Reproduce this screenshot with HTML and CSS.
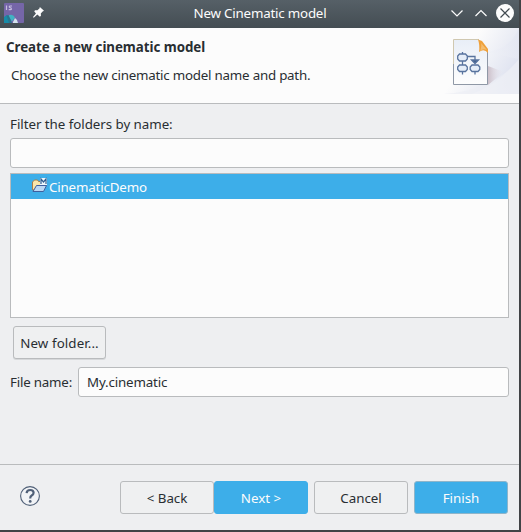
FILE: index.html
```html
<!DOCTYPE html>
<html lang="en">
<head>
<meta charset="utf-8">
<title>New Cinematic model</title>
<link rel="stylesheet" href="styles.css">
</head>
<body>
<main class="window">
  <header class="titlebar">
    <div class="title-left">
      <svg class="app-icon" width="20" height="20" viewBox="0 0 20 20">
        <rect width="20" height="20" rx="1" fill="#7566a8"/>
        <path d="M2.500 2.500v4.500M8 3H6Q4.700 3.600 5.800 4.500L7 5Q8 6.600 6.500 6.600H4.700" fill="none" stroke="#c5bddf" stroke-width="1.200"/>
        <path d="M0 20v-6l3-2 3 8z" fill="#168ba8"/>
        <path d="M4 12.500q5-2 7 2l-3 4z" fill="#41b3c3"/>
        <path d="M2.500 12.500l2-.5 3.500 8H5z" fill="#28758f"/>
        <path d="M9 19l2-4q3 2 3 5H9z" fill="#d3e3ed"/>
      </svg>
      <svg class="pin" width="11" height="11" viewBox="0 0 12 12">
        <path d="M7.500 0L12 4.200 10.500 5 8.500 7.200 8.700 9.500 7.500 10.500 4.700 8.200.800 11.700 0 11 3.200 7 1.300 4.600 2.300 3.500 4.800 3.600 7 1.500z" fill="#fcfcfc"/>
      </svg>
    </div>
    <h1 class="title">New Cinematic model</h1>
    <svg class="controls" width="66" height="20" viewBox="0 0 66 20">
      <path d="M3.500 7.500l5.500 5.500 5.500-5.500M27.500 13l5.500-5.500 5.500 5.500" fill="none" stroke="#fcfcfc" stroke-width="1.200"/>
      <circle cx="57" cy="10" r="9" fill="#fcfcfc"/>
      <path d="M52.500 5.500l9 9M61.500 5.500l-9 9" stroke="#424b51" stroke-width="1.200"/>
    </svg>
  </header>
  <section class="banner">
    <div class="banner-text">
      <h2>Create a new cinematic model</h2>
      <p>Choose the new cinematic model name and path.</p>
    </div>
    <svg class="banner-art" width="75" height="66" viewBox="0 0 75 66">
      <defs>
        <linearGradient id="sky" x1="0" y1="0" x2="1" y2=".5">
          <stop offset=".4" stop-color="#fcfcfc"/><stop offset="1" stop-color="#dfe3f0"/>
        </linearGradient>
        <linearGradient id="swoosh" x1="0" y1="1" x2="1" y2="0">
          <stop offset="0" stop-color="#fcfcfc"/><stop offset="1" stop-color="#e0e4f1"/>
        </linearGradient>
        <linearGradient id="paper" x1="0" y1="0" x2="0" y2="1">
          <stop offset="0" stop-color="#e8eef7"/><stop offset="1" stop-color="#fdfdfd"/>
        </linearGradient>
        <linearGradient id="shade" x1="0" y1="0" x2="1" y2="0">
          <stop offset="0" stop-color="#cbbfc9"/><stop offset="1" stop-color="#eceaf2" stop-opacity="0"/>
        </linearGradient>
      </defs>
      <rect width="75" height="66" fill="url(#sky)"/>
      <path d="M42 24Q66 22 75 0V66H28Q55 56 75 31" fill="url(#swoosh)" opacity=".6"/>
      <path d="M0 66Q50 63 75 31V66z" fill="#eceef5" opacity=".65"/>
      <path d="M44 38L60 44 44 57z" fill="url(#shade)"/>
      <path d="M9.500 11.500H35L43.500 23V56.500H9.500z" fill="url(#paper)"/>
      <path d="M9.500 56V11.500H35" fill="none" stroke="#d0c8b0"/>
      <path d="M43.500 23V56.500H9.500V36" fill="none" stroke="#8f98a6"/>
      <path d="M34 11.500Q36 17 35 24Q40 20 44 25V21L38 13z" fill="#efa13b"/>
      <path d="M36 23Q38 18 37 15L43 22Q39 20 36 23z" fill="#f4bd70"/>
      <g fill="#e5edf8" stroke="#58739e" stroke-width="1.300">
        <path d="M18.500 24v2M18.500 33v4M18.500 43.500v3M31 43.500v3M23 28.500h8v4" fill="none"/>
        <path d="M15.500 26h6l1.800 2v3l-1.800 2h-6l-1.800-2v-3zM15.500 37h6l1.800 2v2.500l-1.800 2h-6l-1.800-2V39zM28 37h6l1.800 2v2.500l-1.800 2h-6l-1.800-2V39z"/>
        <path d="M27.500 32h7L31 35.500z" fill="#45638f"/>
      </g>
    </svg>
  </section>
  <section class="content">
    <label class="filter-label" for="filter">Filter the folders by name:</label>
    <input class="field" id="filter" type="text">
    <div class="tree">
      <div class="tree-row">
        <svg width="16" height="16" viewBox="0 0 16 16">
          <path d="M.500 13V5l2-2h3l1 1.500h4V12z" fill="#fae6aa" stroke="#a87d4a"/>
          <path d="M1 14.500l3.500-6H14.500l-3 6z" fill="#bad7f4" stroke="#3f5f9e"/>
          <path d="M8 1h7v7H8z" fill="#edf6fc"/>
          <path d="M9 7V2l2.500 3L14 2v5" fill="none" stroke="#315f91" stroke-width="1.200"/>
        </svg>
        <span>CinematicDemo</span>
      </div>
    </div>
    <button class="button new-folder">New folder...</button>
    <div class="file-row">
      <label for="file">File name:</label>
      <input class="field" id="file" type="text" value="My.cinematic">
    </div>
  </section>
  <footer class="footer">
    <svg class="help" width="22" height="22" viewBox="0 0 22 22">
      <circle cx="11" cy="11" r="9.400" fill="#f1f3f6" stroke="#506078" stroke-width="1.100"/>
      <path d="M7.600 8.200Q7.900 5 11.200 5Q14.600 5 14.600 7.800Q14.600 9.400 12.700 10.500Q11.200 11.400 11.200 13.400" fill="none" stroke="#506078" stroke-width="2.200"/>
      <circle cx="11.200" cy="16.400" r="1.400" fill="#506078"/>
    </svg>
    <div class="actions">
      <button class="button">&lt; Back</button>
      <button class="button primary next">Next &gt;</button>
      <button class="button cancel">Cancel</button>
      <button class="button primary finish">Finish</button>
    </div>
  </footer>
</main>
</body>
</html>
```
FILE: styles.css
```css
* { box-sizing: border-box; }
body {
  margin: 0;
  height: 532px;
  overflow: hidden;
  background: #414346;
  color: #292e32;
  font: 13.33px/18px "Noto Sans", sans-serif;
}
h1, h2, p { margin: 0; }
svg { display: block; flex: none; }
.window {
  display: flex;
  flex-direction: column;
  width: 519px;
  height: 530px;
  background: #eeeff1;
}
.titlebar {
  display: grid;
  grid-template-columns: 72px 1fr 71px;
  align-items: center;
  height: 28px;
  flex: none;
  background: linear-gradient(#566067, #444d53);
}
.title-left { display: flex; align-items: center; padding-left: 4px; gap: 9px; }
.app-icon { margin-top: -2px; }
.pin { margin-top: -3px; }
.title {
  color: #fcfcfc;
  font-size: 13.33px;
  font-weight: 400;
  letter-spacing: -.2px;
  text-align: center;
  margin-top: -2px;
}
.controls { margin-top: -2px; }
.banner {
  display: flex;
  justify-content: space-between;
  height: 76px;
  flex: none;
  background: #fcfcfc;
  border-bottom: 1px solid #b9bbbd;
}
.banner-text { padding: 10px 0 0 6px; }
.banner h2 { font-size: 13.33px; font-weight: 700; letter-spacing: -.04px; }
.banner p { margin: 10px 0 0 5px; letter-spacing: -.22px; }
.content {
  display: flex;
  flex-direction: column;
  flex: 1;
  padding: 11px 10px 0;
}
.filter-label { margin-bottom: 5px; letter-spacing: -.04px; }
.field {
  width: 100%;
  height: 30px;
  padding: 0 8px;
  border: 1px solid #b9bbbd;
  border-radius: 3px;
  outline: 0;
  background: #fcfcfc;
  color: inherit;
  font: inherit;
  letter-spacing: -.16px;
}
.tree {
  height: 145px;
  margin-top: 5px;
  border: 1px solid #b9bbbd;
  background: #fcfcfc;
}
.tree-row {
  display: flex;
  align-items: center;
  gap: 1px;
  height: 25px;
  padding-left: 21px;
  background: #3daee9;
  color: #fcfcfc;
}
.tree-row svg { margin-top: -4px; }
.tree-row span { margin-top: 1px; letter-spacing: -.16px; }
.button {
  width: 94px;
  height: 33px;
  padding: 0;
  border: 1px solid #b9bbbd;
  border-radius: 3px;
  background: #eff0f1;
  color: #292e32;
  font: inherit;
}
.new-folder {
  width: 93px;
  margin: 8px 0 8px 3px;
  box-shadow: 0 1px 0 #d6d8da;
  letter-spacing: .1px;
}
.file-row { display: flex; align-items: center; gap: 6px; }
.file-row label { width: 62px; flex: none; white-space: nowrap; letter-spacing: -.2px; }
.footer {
  display: flex;
  justify-content: space-between;
  height: 66px;
  flex: none;
  padding: 16px 11px 0 19px;
  border-top: 1px solid #b9bbbd;
}
.help { margin-top: 4px; }
.actions { display: flex; }
.primary { background: #3daee9; color: #fcfcfc; }
.next { border-color: #3daee9; }
.cancel, .finish { margin-left: 6px; }
.finish { border-color: #8eb5ca; }
```
